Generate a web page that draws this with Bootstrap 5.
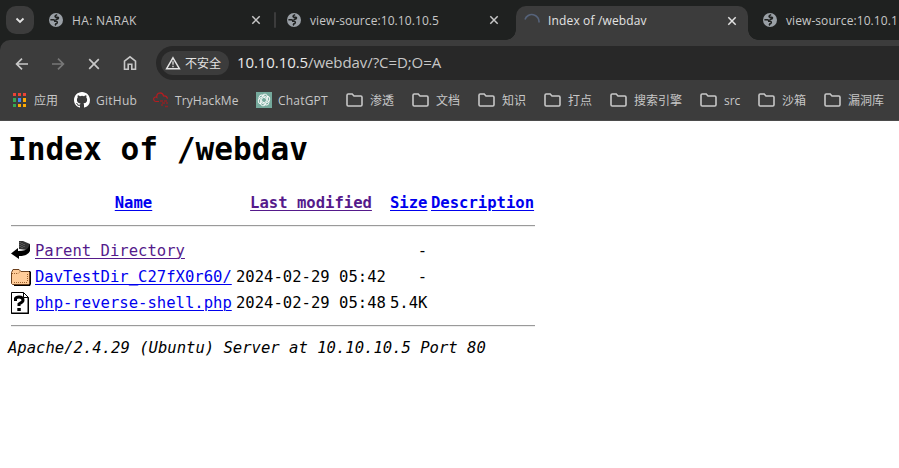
<!DOCTYPE html>
<html lang="zh">
<head>
<meta charset="utf-8">
<meta name="viewport" content="width=device-width, initial-scale=1">
<title>Index of /webdav</title>
<link href="https://cdn.jsdelivr.net/npm/bootstrap@5.3.0/dist/css/bootstrap.min.css" rel="stylesheet">
<style>
body{background:#fff;color:#000;overflow:hidden;height:468px}
.browser{height:121px;background:#1f2120;font:12px/16px "Open Sans","Noto Sans CJK SC",sans-serif;color:#c7c7c7;width:899px}
.strip{height:40px}
.tab-list{width:32px;margin-left:6px;flex:none}
.tab-btn{width:28px;height:28px;border-radius:10px;background:#3c3c3c}
.tab-item{width:238px;height:40px;padding:0 15px 0 11px;flex:none}
.tab-item .fav{margin-right:9px;flex:none}
.tab-title{font-size:12px;letter-spacing:.08px;white-space:nowrap;padding-top:2px}
.first .tab-title{letter-spacing:.35px}
.current .tab-title{letter-spacing:.15px;padding-top:0;margin-left:-1px}
.sep{width:2px;height:16px;background:#3c3c3c;border-radius:1px;margin-left:-2px;flex:none}
.tab-item.current{position:relative;width:232px;height:34px;margin:6px 4px 0 2px;background:#3c3c3c;border-radius:10px 10px 0 0;color:#e3e3e3;padding:0 11px 5px 8px}
.current::before,.current::after{content:"";position:absolute;bottom:0;width:10px;height:10px}
.current::before{left:-10px;background:radial-gradient(circle at 0 0,transparent 9.5px,#3c3c3c 10px)}
.current::after{right:-10px;background:radial-gradient(circle at 100% 0,transparent 9.5px,#3c3c3c 10px)}
.toolbar-area{height:81px;background:#3c3c3c;border-radius:10px 0 0 0;border-bottom:1px solid #4b4b4b}
.tools{height:46px;padding-left:14px}
.tool{width:36px;flex:none}
.address{height:34px;width:780px;background:#282828;border-radius:17px 0 0 17px;flex:none;margin-left:-2px;padding-left:5px}
.chip{height:24px;width:68px;border-radius:12px;background:#3c3c3c;padding-left:4px;color:#e3e3e3;white-space:nowrap}
.chip span{margin-left:4px;padding-top:1px}
.url{font-size:15px;letter-spacing:-.08px;margin-left:8px;color:#c7c7c7;white-space:nowrap;margin-top:-2px}
.url b{font-weight:400;color:#e8e8e8}
.marks{height:28px;padding-left:12px}
.mark-item{flex:none;white-space:nowrap;width:66px}
.mark-item span{padding-top:1px}
.mark-item svg{margin-right:7px;flex:none}
.mark-item.apps{width:62px}.apps svg,.gh svg{margin-right:6px}
.mark-item.gh{width:79px;letter-spacing:.25px}.mark-item.thm{width:103px;letter-spacing:.1px}.mark-item.gpt{width:90px;letter-spacing:.2px}
.mark-item.engine{width:90px}.mark-item.source{width:58px}
.thm svg,.gpt svg{margin-right:6px}
.listing{font-family:"DejaVu Sans Mono",monospace;font-size:15.57px;line-height:19px;padding:9px 8px}
.listing h1{font-size:31.15px;line-height:38px;font-weight:700;margin:0 0 23px}
.listing table{border-collapse:separate;border-spacing:2px;table-layout:fixed;width:529px}
.listing td,.listing th{padding:1px;white-space:nowrap;overflow:visible}
.listing th{text-align:center}
.listing td{height:24px;padding:2px 1px 0}
.listing .ic{width:22px}.listing .nm{width:199px}.listing .dt{width:152px}.listing .sz{width:39px}
.listing a{color:#00e;text-underline-offset:2px;text-decoration-thickness:1px}
.listing a.seen{color:#551a8b}
.listing hr{margin:8px 0;border:0;border-top:1px solid #9a9a9a;border-bottom:1px solid #eee;opacity:1;height:2px}
.listing td.rule{padding:1px 0 1px 1px;height:20px;line-height:0}
.listing svg{display:block}
.listing address{margin:1px 0 0;line-height:19px;font-size:15.57px;font-style:italic}
</style>
<script src="https://cdn.jsdelivr.net/npm/bootstrap@5.3.0/dist/js/bootstrap.bundle.min.js"></script>
</head>
<body>
<svg class="d-none">
<symbol id="globe" viewBox="0 0 14 14"><circle cx="7" cy="7" r="7" fill="#9aa0a6"/><path d="M8.2 1.7C5.8 2.2 5.6 3.8 7 4.2c1.6.4 2.6-.3 2.4 1C9.200 6.600 7.500 6 6.500 6.600M1.400 6.800H4.500Q5.600 6.800 5.800 8.200q2.600-.3 2.500 1.300-.1 1.300-1.500 1.400-.2 1-.9 1.400" fill="none" stroke="#1f2120" stroke-width="1.600"/></symbol>
<symbol id="close" viewBox="0 0 10 10"><path d="M1.3 1.3l7.4 7.4M8.7 1.3L1.3 8.7" fill="none" stroke="currentColor" stroke-width="1.5"/></symbol>
<symbol id="folder" viewBox="0 0 17 14"><path d="M1 2.2Q1 1 2.2 1h4l1.8 2h6.8Q16 3 16 4.2v7.6Q16 13 14.8 13H2.2Q1 13 1 11.8z" fill="none" stroke="#c7c7c7" stroke-width="1.6"/></symbol>
</svg>
<div class="browser">
  <div class="strip d-flex align-items-center overflow-hidden">
    <div class="tab-list"><div class="tab-btn d-flex align-items-center justify-content-center"><svg width="10" height="7"><path d="M1.5 1.5L5 5l3.5-3.5" fill="none" stroke="#e3e3e3" stroke-width="1.8"/></svg></div></div>
    <div class="tab-item first d-flex align-items-center"><svg class="fav" width="14" height="14"><use href="#globe"/></svg><span class="tab-title">HA: NARAK</span><svg class="ms-auto" width="10" height="10"><use href="#close"/></svg></div>
    <div class="sep"></div>
    <div class="tab-item d-flex align-items-center"><svg class="fav" width="14" height="14"><use href="#globe"/></svg><span class="tab-title">view-source:10.10.10.5</span><svg class="ms-auto" width="10" height="10"><use href="#close"/></svg></div>
    <div class="tab-item current d-flex align-items-center"><svg class="fav" width="16" height="16"><path d="M1 6.5A7.2 7.2 0 0 1 15 9.5" fill="none" stroke="#56637a" stroke-width="1.6"/></svg><span class="tab-title">Index of /webdav</span><svg class="ms-auto" width="10" height="10"><use href="#close"/></svg></div>
    <div class="tab-item d-flex align-items-center"><svg class="fav" width="14" height="14"><use href="#globe"/></svg><span class="tab-title">view-source:10.10.1</span></div>
  </div>
  <div class="toolbar-area overflow-hidden">
    <div class="tools d-flex align-items-center">
      <div class="tool"><svg width="16" height="14"><path d="M14 7H3M8 1.6L2.6 7 8 12.4" fill="none" stroke="#c7c7c7" stroke-width="1.7"/></svg></div>
      <div class="tool"><svg width="16" height="14"><path d="M2 7h11M8 1.6L13.4 7 8 12.4" fill="none" stroke="#777" stroke-width="1.7"/></svg></div>
      <div class="tool"><svg width="16" height="14"><path d="M3.2 2.2l9.6 9.6M12.8 2.2l-9.6 9.6" fill="none" stroke="#c7c7c7" stroke-width="1.7"/></svg></div>
      <div class="tool"><svg width="16" height="16"><path d="M2.5 6.200L8 1.800l5.500 4.400V14.200H9.800V9.200H6.200V14.200H2.500z" fill="none" stroke="#c7c7c7" stroke-width="1.6"/></svg></div>
      <div class="address d-flex align-items-center">
        <div class="chip d-flex align-items-center"><svg width="16" height="14"><path d="M8 1.8L14.4 12.7H1.6z" fill="none" stroke="#e3e3e3" stroke-width="1.5"/><path d="M8 5.2v3.6M8 9.8v1.5" stroke="#e3e3e3" stroke-width="1.3"/></svg><span>不安全</span></div>
        <div class="url"><b>10.10.10.5</b>/webdav/?C=D;O=A</div>
      </div>
    </div>
    <div class="marks d-flex align-items-center">
      <div class="mark-item apps d-flex align-items-center"><svg width="16" height="14"><g fill="#ea4335"><path d="M1 0h3v3H1zM6 0h3v3H6zM11 0h3v3h-3z"/></g><path fill="#34a853" d="M1 5h3v4H1zM1 11h3v3H1z"/><path fill="#4285f4" d="M6 5h3v4H6z"/><path fill="#fbab05" d="M11 5h3v4h-3zM6 11h3v3H6zM11 11h3v3h-3z"/></svg><span>应用</span></div>
      <div class="mark-item gh d-flex align-items-center"><svg width="16" height="16" viewBox="0 0 16 16"><path fill="#fff" d="M8 0C3.58 0 0 3.58 0 8c0 3.54 2.29 6.53 5.47 7.59.4.07.55-.17.55-.38 0-.19-.01-.82-.01-1.49-2.01.37-2.53-.49-2.69-.94-.09-.23-.48-.94-.82-1.13-.28-.15-.68-.52-.01-.53.63-.01 1.08.58 1.23.82.72 1.21 1.87.87 2.33.66.07-.52.28-.87.51-1.07-1.78-.2-3.64-.89-3.64-3.95 0-.87.31-1.59.82-2.15-.08-.2-.36-1.02.08-2.12 0 0 .67-.21 2.2.82a7.6 7.6 0 0 1 4 0c1.53-1.04 2.2-.82 2.2-.82.44 1.1.16 1.92.08 2.12.51.56.82 1.27.82 2.15 0 3.07-1.87 3.75-3.65 3.95.29.25.54.73.54 1.48 0 1.07-.01 1.93-.01 2.2 0 .21.15.46.55.38A8 8 0 0 0 16 8c0-4.42-3.58-8-8-8z"/></svg><span>GitHub</span></div>
      <div class="mark-item thm d-flex align-items-center"><svg width="16" height="16"><path d="M6 9.5H2.8A2.3 2.3 0 0 1 2.3 5Q3.2 4.9 3.8 5.4 3.4 1 7.2.8q2.8 0 3.3 3 3.6-.2 4 2.8" fill="none" stroke="#b51c20" stroke-width="1.2"/><path d="M7 9h3M11 9h3M9 11h3M13 11h2M8 13h2M12 14.5h3" stroke="#8c2224" stroke-width="1.3"/></svg><span>TryHackMe</span></div>
      <div class="mark-item gpt d-flex align-items-center"><svg width="16" height="16"><path fill="#75a99c" d="M0 0h16v16H0z"/><g fill="none" stroke="#fff" stroke-width=".9" transform="translate(8 8)"><path id="petal" d="M-1.900-4.200A2.900 2.900 0 0 1 3.600-3.100V.6L.5 2.400"/><use href="#petal" transform="rotate(60)"/><use href="#petal" transform="rotate(120)"/><use href="#petal" transform="rotate(180)"/><use href="#petal" transform="rotate(240)"/><use href="#petal" transform="rotate(300)"/></g></svg><span>ChatGPT</span></div>
      <div class="mark-item d-flex align-items-center"><svg width="17" height="14"><use href="#folder"/></svg><span>渗透</span></div>
      <div class="mark-item d-flex align-items-center"><svg width="17" height="14"><use href="#folder"/></svg><span>文档</span></div>
      <div class="mark-item d-flex align-items-center"><svg width="17" height="14"><use href="#folder"/></svg><span>知识</span></div>
      <div class="mark-item d-flex align-items-center"><svg width="17" height="14"><use href="#folder"/></svg><span>打点</span></div>
      <div class="mark-item engine d-flex align-items-center"><svg width="17" height="14"><use href="#folder"/></svg><span>搜索引擎</span></div>
      <div class="mark-item source d-flex align-items-center"><svg width="17" height="14"><use href="#folder"/></svg><span>src</span></div>
      <div class="mark-item d-flex align-items-center"><svg width="17" height="14"><use href="#folder"/></svg><span>沙箱</span></div>
      <div class="mark-item d-flex align-items-center"><svg width="17" height="14"><use href="#folder"/></svg><span>漏洞库</span></div>
    </div>
  </div>
</div>
<main class="listing">
  <h1>Index of /webdav</h1>
  <table>
    <colgroup><col class="ic"><col class="nm"><col class="dt"><col class="sz"><col></colgroup>
    <tbody>
    <tr><th></th><th><a href="#">Name</a></th><th><a class="seen" href="#">Last modified</a></th><th><a href="#">Size</a></th><th><a href="#">Description</a></th></tr>
    <tr><td class="rule" colspan="5"><hr></td></tr>
    <tr><td><svg width="20" height="22"><path d="M8 1h4l7 3v3l-3 3-8-1z" fill="#333"/><path d="M19 4v7q-2 5-11 5v3L0 13.5 7 8v3q8 0 10-3z" fill="#000"/><path d="M9 2v6M11 3v5M13 4v4" stroke="#777" stroke-dasharray="1 1"/></svg></td><td><a class="seen" href="#">Parent Directory</a></td><td></td><td class="text-end">-</td><td></td></tr>
    <tr><td><svg width="20" height="22"><path d="M3 5h16l1 1v12l-1 2H3z" fill="#000"/><path d="M.5 6.500L2 3.500h6l2 2h7.500l1 1v11l-1 1h-16l-1-1z" fill="#fc9" stroke="#6b3f1c"/><path d="M1 7.500h6l2-2M3 16.500h14M16.500 8v8" fill="none" stroke="#9c602c" stroke-dasharray="1 1"/></svg></td><td><a href="#">DavTestDir_C27fX0r60/</a></td><td>2024-02-29 05:42</td><td class="text-end">-</td><td></td></tr>
    <tr><td><svg width="20" height="22"><path d="M.5.5h12l5 5v16H.5z" fill="#fff" stroke="#000"/><path d="M12.5.5v5h5M17 6v16M0 21h18" fill="none" stroke="#000"/><path d="M4.500 9V6.500Q5 5 8 5q4 0 4 3 0 2-2.500 3L8 12v2M6.300 17.500h3.500" fill="none" stroke="#000" stroke-width="3"/></svg></td><td><a href="#">php-reverse-shell.php</a></td><td>2024-02-29 05:48</td><td class="text-end">5.4K</td><td></td></tr>
    <tr><td class="rule" colspan="5"><hr></td></tr>
    </tbody>
  </table>
  <address>Apache/2.4.29 (Ubuntu) Server at 10.10.10.5 Port 80</address>
</main>
</body>
</html>
